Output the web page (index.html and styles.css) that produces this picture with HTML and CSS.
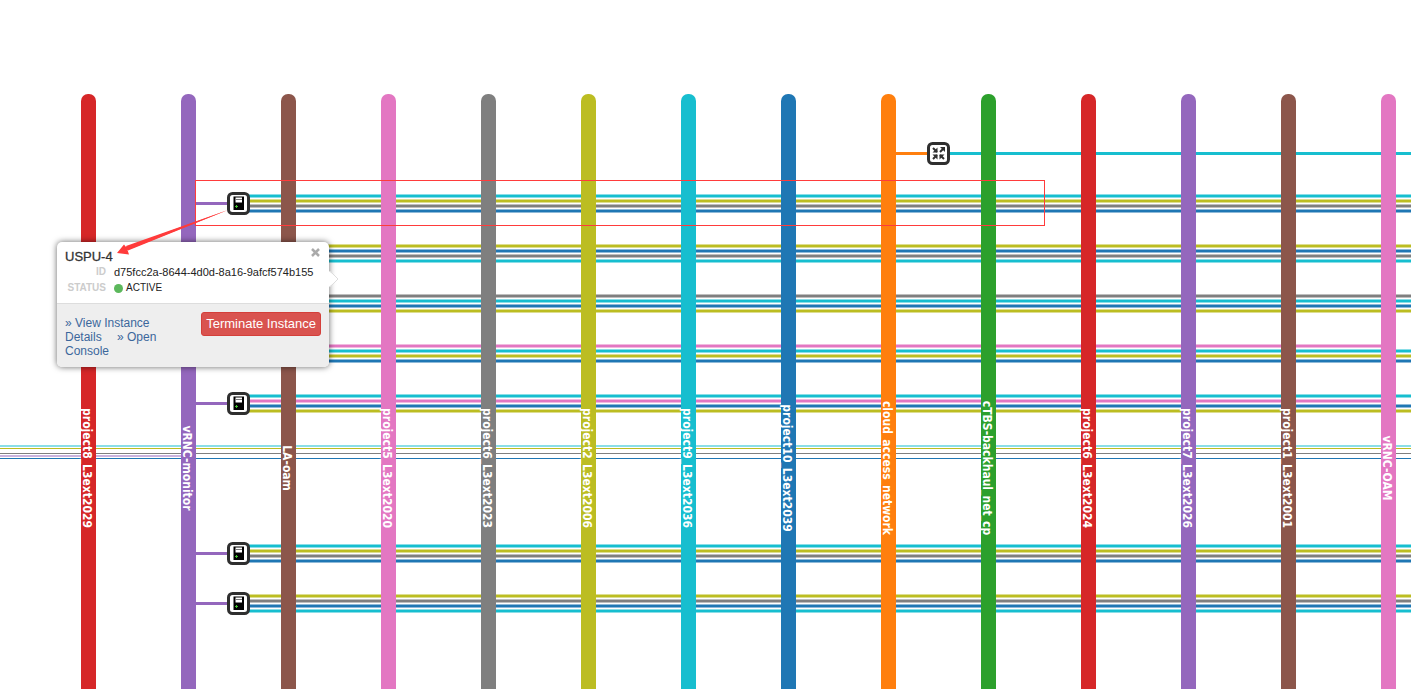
FILE: index.html
```html
<!DOCTYPE html>
<html lang="en">
<head>
<meta charset="utf-8">
<title>Network Topology</title>
<link rel="stylesheet" href="styles.css">
</head>
<body>
<main class="topology">
  <svg class="canvas" role="img" aria-label="Network topology">
    <defs>
      <g id="instance">
        <rect class="node-box" x="1.5" y="1.5" width="20" height="20" rx="4"/>
        <rect x="6.500" y="4.500" width="10.500" height="13.500" fill="#000"/>
        <rect x="8.500" y="5.500" width="6.500" height="5" fill="#fff"/>
        <path d="M8.500 7.500h6.500" stroke="#777"/>
        <path d="M8 14.5h3M9.500 13v3" stroke="#3fbf2f"/>
      </g>
      <g id="router">
        <rect class="node-box" x="1.5" y="1.5" width="20" height="20" rx="4"/>
        <path d="M6 6l4 4M17 6l-4 4M6 17l4-4M17 17l-4-4" stroke="#2f2f2f" stroke-width="2"/>
        <path d="M10.500 5.500v5h-5zM13 5h5v5zM5.500 12.500h5v5zM12.500 12.500h5l-5 5z" fill="#2f2f2f"/>
      </g>
    </defs>

    <g class="hairlines">
      <line class="cyan" x1="0" y1="446" x2="100%" y2="446"/>
      <line class="olive" x1="0" y1="448.5" x2="100%" y2="448.5"/>
      <line class="gray" x1="0" y1="453.5" x2="100%" y2="453.5"/>
      <line class="purple" x1="0" y1="456" x2="188" y2="456"/>
      <line class="blue" x1="0" y1="458.5" x2="100%" y2="458.5"/>
    </g>

    <g class="links">
      <line class="orange" x1="888" y1="153.5" x2="930" y2="153.5"/>
      <line class="cyan" x1="946" y1="153.5" x2="100%" y2="153.5"/>

      <line class="purple" x1="188" y1="203.5" x2="230" y2="203.5"/>
      <line class="cyan" x1="246" y1="196" x2="100%" y2="196"/>
      <line class="olive" x1="246" y1="201" x2="100%" y2="201"/>
      <line class="gray" x1="246" y1="206" x2="100%" y2="206"/>
      <line class="blue" x1="246" y1="211" x2="100%" y2="211"/>

      <line class="olive" x1="246" y1="246" x2="100%" y2="246"/>
      <line class="blue" x1="246" y1="251" x2="100%" y2="251"/>
      <line class="gray" x1="246" y1="256" x2="100%" y2="256"/>
      <line class="cyan" x1="246" y1="261" x2="100%" y2="261"/>

      <line class="gray" x1="246" y1="296" x2="100%" y2="296"/>
      <line class="cyan" x1="246" y1="301" x2="100%" y2="301"/>
      <line class="blue" x1="246" y1="306" x2="100%" y2="306"/>
      <line class="olive" x1="246" y1="311" x2="100%" y2="311"/>

      <line class="pink" x1="246" y1="346" x2="1388" y2="346"/>
      <line class="cyan" x1="246" y1="351" x2="100%" y2="351"/>
      <line class="olive" x1="246" y1="356" x2="100%" y2="356"/>
      <line class="blue" x1="246" y1="361" x2="100%" y2="361"/>

      <line class="purple" x1="188" y1="403.5" x2="230" y2="403.5"/>
      <line class="cyan" x1="246" y1="396" x2="100%" y2="396"/>
      <line class="pink" x1="246" y1="401" x2="1388" y2="401"/>
      <line class="blue" x1="246" y1="406" x2="100%" y2="406"/>
      <line class="olive" x1="246" y1="411" x2="100%" y2="411"/>

      <line class="purple" x1="188" y1="553.5" x2="230" y2="553.5"/>
      <line class="cyan" x1="246" y1="546" x2="100%" y2="546"/>
      <line class="olive" x1="246" y1="551" x2="100%" y2="551"/>
      <line class="gray" x1="246" y1="556" x2="100%" y2="556"/>
      <line class="blue" x1="246" y1="561" x2="100%" y2="561"/>

      <line class="purple" x1="188" y1="603.5" x2="230" y2="603.5"/>
      <line class="olive" x1="246" y1="596" x2="100%" y2="596"/>
      <line class="gray" x1="246" y1="601" x2="100%" y2="601"/>
      <line class="blue" x1="246" y1="606" x2="100%" y2="606"/>
      <line class="cyan" x1="246" y1="611" x2="100%" y2="611"/>
    </g>

    <g class="networks">
      <rect class="red" x="81" y="94" width="15" height="100%" rx="7"/>
      <rect class="purple" x="181" y="94" width="15" height="100%" rx="7"/>
      <rect class="brown" x="281" y="94" width="15" height="100%" rx="7"/>
      <rect class="pink" x="381" y="94" width="15" height="100%" rx="7"/>
      <rect class="gray" x="481" y="94" width="15" height="100%" rx="7"/>
      <rect class="olive" x="581" y="94" width="15" height="100%" rx="7"/>
      <rect class="cyan" x="681" y="94" width="15" height="100%" rx="7"/>
      <rect class="blue" x="781" y="94" width="15" height="100%" rx="7"/>
      <rect class="orange" x="881" y="94" width="15" height="100%" rx="7"/>
      <rect class="green" x="981" y="94" width="15" height="100%" rx="7"/>
      <rect class="red" x="1081" y="94" width="15" height="100%" rx="7"/>
      <rect class="purple" x="1181" y="94" width="15" height="100%" rx="7"/>
      <rect class="brown" x="1281" y="94" width="15" height="100%" rx="7"/>
      <rect class="pink" x="1381" y="94" width="15" height="100%" rx="7"/>
    </g>

    <g class="labels">
      <text transform="translate(83 468) rotate(90)">project8_L3ext2029</text>
      <text transform="translate(183 468) rotate(90)">vRNC-monitor</text>
      <text transform="translate(283 468) rotate(90)">LA-oam</text>
      <text transform="translate(383 468) rotate(90)">project5_L3ext2020</text>
      <text transform="translate(483 468) rotate(90)">project6_L3ext2023</text>
      <text transform="translate(583 468) rotate(90)">project2_L3ext2006</text>
      <text transform="translate(683 468) rotate(90)">project9_L3ext2036</text>
      <text transform="translate(783 468) rotate(90)">project10_L3ext2039</text>
      <text transform="translate(883 468) rotate(90)">cloud_access_network</text>
      <text transform="translate(983 468) rotate(90)">cTBS-backhaul_net_cp</text>
      <text transform="translate(1083 468) rotate(90)">project6_L3ext2024</text>
      <text transform="translate(1183 468) rotate(90)">project7_L3ext2026</text>
      <text transform="translate(1283 468) rotate(90)">project1_L3ext2001</text>
      <text transform="translate(1383 468) rotate(90)">vRNC-OAM</text>
    </g>

    <use href="#router" x="927" y="142"/>
    <use href="#instance" x="227" y="192"/>
    <use href="#instance" x="227" y="392"/>
    <use href="#instance" x="227" y="542"/>
    <use href="#instance" x="227" y="592"/>

    <rect class="highlight" x="195.5" y="180.5" width="849" height="45"/>
  </svg>

  <section class="balloon" aria-labelledby="balloon-title">
    <button class="close" type="button" aria-label="Close">
      <svg width="9" height="9" viewBox="0 0 9 9"><path d="M1 1l7 7M8 1l-7 7"/></svg>
    </button>
    <div class="info">
      <h3 class="title" id="balloon-title">USPU-4</h3>
      <table class="details">
        <tr><th scope="row">ID</th><td>d75fcc2a-8644-4d0d-8a16-9afcf574b155</td></tr>
        <tr><th scope="row">STATUS</th><td class="status"><span class="dot"></span>ACTIVE</td></tr>
      </table>
    </div>
    <div class="actions">
      <p class="action-links"><a href="#details">» View Instance Details</a> <a class="console" href="#console">» Open Console</a></p>
      <button class="terminate" type="button">Terminate Instance</button>
    </div>
    <svg class="pointer" width="10" height="18" viewBox="0 0 10 18"><path class="pointer-fill" d="M0 1l9 8-9 8z"/><path class="pointer-edge" d="M1 1l8 8-8 8"/></svg>
  </section>

  <svg class="arrow" width="120" height="50" viewBox="0 0 120 50">
    <path d="M115 3L14.500 43L16 47.500L4 46L11 37.500L13 40Z"/>
    <path d="M115 3L13 39L15 43.500Z"/>
  </svg>
</main>
</body>
</html>
```
FILE: styles.css
```css
body {
  margin: 0;
  background: #fff;
  font-family: "Liberation Sans", Arial, sans-serif;
  color: #333;
}

.topology {
  position: relative;
  height: 100vh;
  overflow: hidden;
}

.canvas {
  display: block;
  width: 100%;
  height: 100%;
}

.red { --c: #d62728; }
.purple { --c: #9467bd; }
.brown { --c: #8c564b; }
.pink { --c: #e377c2; }
.gray { --c: #7f7f7f; }
.olive { --c: #bcbd22; }
.cyan { --c: #17becf; }
.blue { --c: #1f77b4; }
.orange { --c: #ff7f0e; }
.green { --c: #2ca02c; }

.hairlines line { stroke: var(--c); stroke-width: 1px; }
.links line { stroke: var(--c); stroke-width: 3px; }
.networks rect { fill: var(--c); }

.labels text {
  fill: #fff;
  font: bold 12px "DejaVu Sans Condensed", "DejaVu Sans", sans-serif;
  text-anchor: middle;
}

.node-box {
  fill: #fff;
  stroke: #2f2f2f;
  stroke-width: 3px;
}

.highlight {
  fill: none;
  stroke: #ff3b3b;
}

.balloon {
  position: absolute;
  left: 57px;
  top: 242px;
  width: 272px;
  border-radius: 5px;
  background: #fff;
  box-shadow: 0 0 6px rgba(0, 0, 0, 0.6);
}

.close {
  position: absolute;
  top: 6px;
  right: 9px;
  display: flex;
  padding: 0;
  border: 0;
  background: none;
}

.close path {
  stroke: #aaa;
  stroke-width: 2.5px;
}

.info {
  padding: 8px 8px 7px;
  border-bottom: 1px solid #ddd;
}

.title {
  margin: 0;
  font-size: 13px;
  font-weight: normal;
  line-height: 14px;
  -webkit-text-stroke: 0.3px #333;
}

.details {
  border-collapse: collapse;
  font-size: 11px;
  line-height: 16px;
}

.details th {
  width: 41px;
  padding: 0 8px 0 0;
  color: #ccc;
  font-size: 10px;
  text-align: right;
}

.details td {
  padding: 0;
  color: #222;
}

.details .status {
  font-size: 10px;
}

.dot {
  display: inline-block;
  width: 9px;
  height: 9px;
  margin-right: 3px;
  border-radius: 50%;
  background: #5cb85c;
  vertical-align: -2px;
}

.actions {
  display: flex;
  justify-content: space-between;
  align-items: flex-start;
  padding: 8px 8px 9px;
  border-radius: 0 0 5px 5px;
  background: #eee;
}

.action-links {
  width: 110px;
  margin: 4px 0 0;
  font-size: 12px;
  line-height: 14px;
}

.action-links a {
  color: #3b679c;
  text-decoration: none;
}

.console {
  margin-left: 12px;
}

.terminate {
  height: 24px;
  padding: 0 4px 2px;
  border: 1px solid #d43f3a;
  border-radius: 3px;
  background: #d9534f;
  color: #fff;
  font: 13px "Liberation Sans", Arial, sans-serif;
}

.pointer {
  position: absolute;
  top: 28px;
  left: 100%;
}

.pointer-fill { fill: #fff; }
.pointer-edge { fill: none; stroke: #ddd; }

.arrow {
  position: absolute;
  left: 113px;
  top: 207px;
  fill: #ff3b3b;
  pointer-events: none;
}
```
